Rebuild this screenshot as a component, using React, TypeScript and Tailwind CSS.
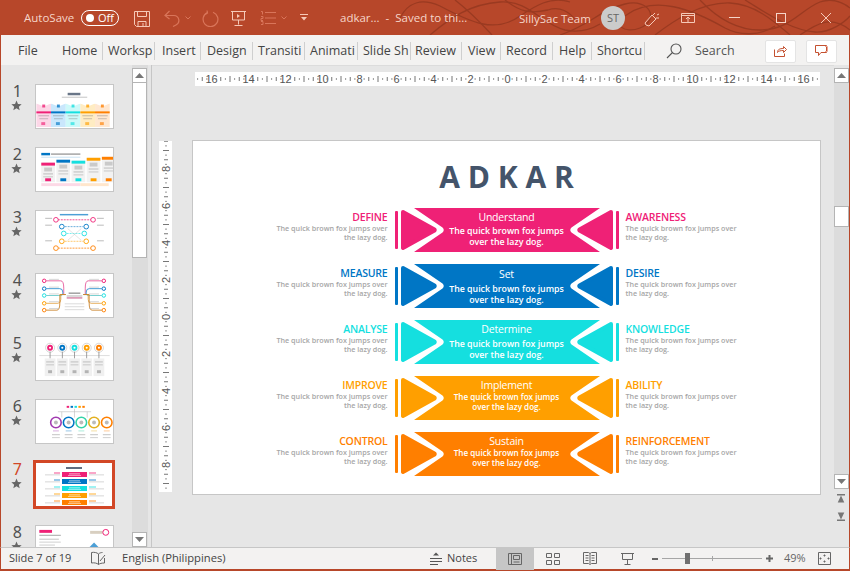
import React from "react";

const PINK = "#ef2176", BLUE = "#0076c5", CYAN = "#15dfdf", AMBER = "#ff9f00", ORANGE = "#ff7f00";

const rows = [
  { l: "DEFINE", r: "AWARENESS", m: "Understand", c: PINK, small: false, a: 2, b: 1 },
  { l: "MEASURE", r: "DESIRE", m: "Set", c: BLUE, small: false, a: 3, b: 2 },
  { l: "ANALYSE", r: "KNOWLEDGE", m: "Determine", c: CYAN, small: false, a: 2, b: 2 },
  { l: "IMPROVE", r: "ABILITY", m: "Implement", c: AMBER, small: true, a: 2, b: 0 },
  { l: "CONTROL", r: "REINFORCEMENT", m: "Sustain", c: ORANGE, small: true, a: 2, b: 0 },
];

function Banner({ c }: { c: string }) {
  return (
    <svg width="224" height="44" viewBox="0 0 224 44" className="col-start-1 row-start-1">
      <rect x="0" y="3" width="3" height="38" rx="1" fill={c} />
      <rect x="221" y="3" width="3" height="38" rx="1" fill={c} />
      <path d="M8 4 L39.500 21.500 Q40 22 39.500 22.500 L8 40 Z" fill={c} stroke={c} strokeWidth="4" strokeLinejoin="round" />
      <path d="M216 4 L184.500 21.500 Q184 22 184.500 22.500 L216 40 Z" fill={c} stroke={c} strokeWidth="4" strokeLinejoin="round" />
      <path d="M19 0 L205 0 L176.500 19.500 Q174 22 176.500 24.500 L205 44 L19 44 L47.500 24.500 Q50 22 47.500 19.500 Z" fill={c} />
    </svg>
  );
}

function Label({ title, color, right }: { title: string; color: string; right?: boolean }) {
  return (
    <div className={right ? "w-[130px] pt-[3px] text-left" : "w-[130px] pt-[3px] text-right"}>
      <div className="text-[10.500px] leading-[13px] font-semibold tracking-[-0.2px]" style={{ color }}>{title}</div>
      <div className="text-[7.200px] leading-[9px] text-[#a6a6a6] font-semibold">
        The quick brown fox jumps over<br />the lazy dog.
      </div>
    </div>
  );
}

function Slide() {
  return (
    <div className="w-[629px] h-[355px] bg-white border border-[#c6c6c6] flex flex-col items-center font-['Open_Sans',sans-serif]">
      <div className="h-[67px] pt-[12px] text-[30px] leading-[48px] font-bold text-[#44546a] whitespace-nowrap">A D K A R</div>
      <div className="flex flex-col gap-[12px]">
        {rows.map((r) => (
          <div key={r.l} className="flex h-[44px] gap-[7px]">
            <Label title={r.l} color={r.c} />
            <div className="grid w-[224px]">
              <Banner c={r.c} />
              <div className="col-start-1 row-start-1 flex flex-col items-center text-white text-center">
                <div className={r.small ? "text-[10.500px] leading-[14px] tracking-[-0.2px]" : "text-[10.500px] leading-[15px] tracking-[-0.2px]"} style={{ paddingTop: r.a }}>{r.m}</div>
                <div className={r.small ? "text-[8.100px] leading-[10px] font-semibold" : "text-[8.800px] leading-[11px] font-semibold"} style={{ paddingTop: r.b }}>
                  The quick brown fox jumps<br />over the lazy dog.
                </div>
              </div>
            </div>
            <Label title={r.r} color={r.c} right />
          </div>
        ))}
      </div>
    </div>
  );
}

const Bx = ({ x, y, w, h, c, o }: { x: number; y: number; w: number; h: number; c: string; o?: number }) => (
  <rect x={x} y={y} width={w} height={h} fill={c} opacity={o ?? 1} />
);
const five = [PINK, BLUE, CYAN, AMBER, ORANGE];

function T1() {
  const light = ["#fcd0e3", "#bfe3fb", "#c4f8f8", "#ffe9b8", "#ffe3c8"];
  return (
    <svg viewBox="0 0 78 44" className="w-full h-full blur-[0.3px]">
      <Bx x={32} y={8} w={13} h={2.5} c="#44546a" o={0.8} />
      <Bx x={26} y={12} w={26} h={1} c="#888" o={0.5} />
      {five.map((c, i) => (
        <g key={c}>
          <Bx x={i * 15} y={19} w={15} h={24} c={light[i]} o={0.85} />
          <path d={`M${i * 15} 19 l7.5 3 l7.5 -3 v-1 h-15 Z`} fill="#fff" />
          <Bx x={i * 15 + 6} y={20} w={3} h={3} c={c} o={0.8} />
          <Bx x={i * 15} y={27} w={15} h={2} c={c} />
          <Bx x={i * 15 + 2} y={31} w={11} h={1} c="#777" o={0.45} />
          <Bx x={i * 15 + 3} y={34} w={9} h={1} c="#777" o={0.4} />
          <Bx x={i * 15 + 5} y={38} w={4} h={3} c={c} o={0.65} />
        </g>
      ))}
    </svg>
  );
}
function T2() {
  const ys = [15, 12, 13, 10, 9];
  return (
    <svg viewBox="0 0 78 44" className="w-full h-full blur-[0.3px]">
      <Bx x={5} y={5} w={9} h={2.5} c={BLUE} /><Bx x={15} y={5.5} w={30} h={1.5} c="#666" o={0.6} />
      <Bx x={5} y={9} w={40} h={0.7} c={BLUE} o={0.3} />
      {five.map((c, i) => (
        <g key={c}>
          <Bx x={5 + i * 15.5} y={ys[i]} w={14} h={26 - ys[i] + 9} c="#f2f2f2" />
          <Bx x={5 + i * 15.5} y={ys[i]} w={14} h={3} c={c} />
          <Bx x={8 + i * 15.5} y={ys[i] + 5} w={8} h={4} c="#aaa" o={0.55} />
          <Bx x={7 + i * 15.5} y={ys[i] + 11} w={10} h={1} c="#888" o={0.5} />
          <Bx x={7 + i * 15.5} y={ys[i] + 14} w={10} h={1} c="#888" o={0.4} />
          <Bx x={9 + i * 15.5} y={31} w={6} h={3} c={c} />
        </g>
      ))}
      <Bx x={5} y={36} w={40} h={3} c="#fcd9e6" /><Bx x={45} y={36} w={29} h={3} c="#ffe6cc" />
    </svg>
  );
}
function T3() {
  const pts: [number, number, string][] = [[20, 9, PINK], [58, 9, PINK], [26, 16, BLUE], [51, 16, BLUE], [28, 23, CYAN], [49, 23, CYAN], [26, 31, AMBER], [51, 31, AMBER], [20, 38, ORANGE], [58, 38, ORANGE]];
  return (
    <svg viewBox="0 0 78 44" className="w-full h-full blur-[0.3px]">
      <Bx x={24} y={3} w={29} h={1.5} c={BLUE} o={0.7} />
      <path d="M22 9H56" stroke={PINK} strokeWidth=".8" strokeDasharray="2 1" />
      <path d="M29 16H48" stroke={BLUE} strokeWidth=".6" strokeDasharray="2 1" />
      <path d="M31 23H46" stroke={CYAN} strokeWidth=".6" strokeDasharray="2 1" />
      <path d="M29 31H48" stroke={AMBER} strokeWidth=".6" strokeDasharray="2 1" />
      <path d="M22 38H56" stroke={ORANGE} strokeWidth=".8" strokeDasharray="2 1" />
      <path d="M32 18L46 30M46 18L32 30" stroke="#bbb" strokeWidth=".4" />
      {pts.map(([x, y, c], i) => <circle key={i} cx={x} cy={y} r="2.4" fill="#fff" stroke={c} strokeWidth=".9" />)}
      {[7, 14, 30].map((y) => <Bx key={y} x={9} y={y} w={7} h={1} c="#777" o={0.5} />)}
      {[7, 14, 30].map((y) => <Bx key={y} x={62} y={y} w={7} h={1} c="#777" o={0.5} />)}
    </svg>
  );
}
function T4() {
  const ys = [7, 15, 22, 30, 37];
  const tc = ["#e5589a", "#2f8fd0", "#68c9c9", "#e3a64d", "#c9822a"];
  return (
    <svg viewBox="0 0 78 44" className="w-full h-full blur-[0.3px]" fill="none">
      {ys.map((y, i) => (
        <g key={y}>
          <circle cx={8} cy={y} r="1.8" stroke={five[i]} strokeWidth="1" />
          <circle cx={69} cy={y} r="1.8" stroke={five[i]} strokeWidth="1" />
          <path d={`M10 ${y}H${25 - i} Q${28 - i} ${y} ${28 - i} ${y + (22 - y) / 2}V21H30`} stroke={tc[i]} strokeWidth=".9" />
          <path d={`M67 ${y}H${53 + i} Q${50 + i} ${y} ${50 + i} ${y + (22 - y) / 2}V21H48`} stroke={tc[i]} strokeWidth=".9" />
          <Bx x={13} y={y - 2} w={10} h={0.8} c="#999" o={0.5} />
          <Bx x={54} y={y - 2} w={10} h={0.8} c="#999" o={0.5} />
        </g>
      ))}
      <Bx x={33} y={19} w={12} h={1.2} c="#555" o={0.7} />
      <Bx x={31} y={22} w={16} h={1} c="#666" o={0.5} />
      <Bx x={31} y={24} w={16} h={1} c="#b5225f" o={0.8} />
      <Bx x={29} y={30} w={20} h={1} c="#999" o={0.35} />
      <Bx x={29} y={33} w={20} h={1} c="#999" o={0.35} />
      <Bx x={29} y={36} w={20} h={1} c="#999" o={0.35} />
    </svg>
  );
}
function T5() {
  return (
    <svg viewBox="0 0 78 44" className="w-full h-full blur-[0.3px]">
      <path d="M3 19H75" stroke="#bbb" strokeWidth=".5" />
      {five.map((c, i) => {
        const x = 14 + i * 12.5;
        return (
          <g key={c}>
            <circle cx={x} cy={11} r="4.6" fill="#fff" stroke="#ccc" strokeWidth=".8" />
            <circle cx={x} cy={11} r="3" fill={c} />
            <circle cx={x} cy={11} r="1.1" fill="#fff" />
            <Bx x={x - 0.4} y={15} w={0.8} h={7} c="#888" />
            <Bx x={x - 5.5} y={22} w={11} h={18} c="#f0f0f0" />
            <Bx x={x - 4} y={25} w={8} h={1} c="#aaa" o={0.7} />
            <Bx x={x - 4} y={28} w={8} h={1} c="#aaa" o={0.6} />
            <Bx x={x - 2} y={34} w={4} h={3} c="#999" o={0.7} />
          </g>
        );
      })}
    </svg>
  );
}
function T6() {
  const cs = ["#a13bb0", BLUE, "#35d3a8", "#e3b020", ORANGE];
  return (
    <svg viewBox="0 0 78 44" className="w-full h-full blur-[0.3px]" fill="none">
      {five.map((c, i) => <Bx key={c} x={31 + i * 4} y={6} w={2.5} h={2} c={c} />)}
      <path d="M22 12H56M26 12V18M52 12V18M39 9V18" stroke="#bbb" strokeWidth=".6" />
      {cs.map((c, i) => (
        <g key={c}>
          <circle cx={20 + i * 13} cy={23} r="5.4" stroke={c} strokeWidth="1.6" fill="#fff" />
          <circle cx={20 + i * 13} cy={23} r="2" fill="#bbb" />
          <Bx x={17 + i * 13} y={31} w={6} h={1.2} c={c} o={0.35} />
          <Bx x={16 + i * 13} y={35} w={8} h={1} c="#888" o={0.5} />
          <Bx x={16 + i * 13} y={38} w={8} h={1} c="#888" o={0.4} />
        </g>
      ))}
    </svg>
  );
}
function T7() {
  return (
    <svg viewBox="0 0 76 43" className="w-full h-full blur-[0.3px]">
      <Bx x={30} y={4} w={16} h={2} c="#44546a" o={0.85} />
      {five.map((c, i) => (
        <g key={c}>
          <Bx x={26} y={9 + i * 7} w={25} h={5} c={c} />
          <Bx x={33} y={10.500 + i * 7} w={11} h={0.8} c="#fff" o={0.8} />
          <Bx x={32} y={12.200 + i * 7} w={13} h={0.7} c="#fff" o={0.7} />
          <Bx x={18} y={9.500 + i * 7} w={6} h={1} c={c} o={0.8} />
          <Bx x={9} y={11.500 + i * 7} w={15} h={0.8} c="#aaa" o={0.6} />
          <Bx x={53} y={9.500 + i * 7} w={7} h={1} c={c} o={0.8} />
          <Bx x={53} y={11.500 + i * 7} w={15} h={0.8} c="#aaa" o={0.6} />
        </g>
      ))}
    </svg>
  );
}
function T8() {
  return (
    <svg viewBox="0 0 78 44" className="w-full h-full blur-[0.3px]">
      <Bx x={3} y={4} w={13} h={3} c={PINK} />
      <Bx x={3} y={9} w={22} h={1} c="#666" o={0.6} />
      <Bx x={3} y={13} w={20} h={1} c="#888" o={0.5} />
      <Bx x={3} y={16} w={22} h={1} c="#888" o={0.4} />
      <Bx x={3} y={19} w={16} h={1} c="#888" o={0.4} />
      <Bx x={55} y={5} w={13} h={3} c="#d8cfc0" />
      <circle cx={71} cy={6.5} r="3" fill="#fff" stroke={PINK} strokeWidth="1" />
      <path d="M59 17 L52 24 H66 Z" fill={BLUE} opacity=".7" />
      <path d="M52 24 H66 L70 31 H48 Z" fill={AMBER} />
      <Bx x={44} y={24} w={3} h={3} c={BLUE} o={0.7} />
    </svg>
  );
}

const thumbs = [T1, T2, T3, T4, T5, T6, T7, T8];

function ThumbList() {
  return (
    <div className="flex-1 overflow-hidden pt-[19px] font-['Noto_Sans',sans-serif]">
      {thumbs.map((T, i) => {
        const sel = i === 6;
        return (
          <div key={i} className="flex h-[63px]">
            <div className="w-[34px] flex flex-col items-end pr-[13px] -mt-[4px]">
              <div className={sel ? "text-[16px] leading-[22px] text-[#d24726]" : "text-[16px] leading-[22px] text-[#505050]"}>{i + 1}</div>
              <svg width="11" height="11" viewBox="0 0 24 24" className="-mt-[2px]" fill="#666">
                <path d="M12 1l3.2 7.6 8 .7-6.1 5.3 1.9 8L12 18l-7 4.6 1.9-8L.8 9.3l8-.7z" />
              </svg>
            </div>
            <div className={sel ? "w-[76px] h-[43px] ml-[1px] mt-[1px] bg-white outline-[3px] outline-solid outline-[#d24726]" : "w-[79px] h-[45px] bg-white border border-[#c6c6c6]"}>
              <T />
            </div>
          </div>
        );
      })}
    </div>
  );
}

function ScrollBtn({ down }: { down?: boolean }) {
  return (
    <div className="h-[15px] w-[15px] shrink-0 bg-white border border-[#b4b4b4] flex items-center justify-center">
      <svg width="9" height="5" viewBox="0 0 9 5" fill="#777">
        <path d={down ? "M0 0H9L4.5 5Z" : "M0 5H9L4.5 0Z"} />
      </svg>
    </div>
  );
}

function HRuler() {
  const items: React.ReactNode[] = [];
  for (let i = -68; i <= 68; i++) {
    const x = 312.5 + i * 4.625;
    if (i % 8 === 0) {
      items.push(<text key={i} x={x} y="11" fontSize="11" textAnchor="middle" fill="#555">{Math.abs(i / 4)}</text>);
    } else {
      const h = i % 4 === 0 ? 6 : i % 2 === 0 ? 4 : 1.5;
      items.push(<rect key={i} x={x - 0.5} y={7 - h / 2} width="1" height={h} fill="#777" />);
    }
  }
  return (
    <svg width="625" height="14" viewBox="0 0 625 14" className="bg-white font-['Liberation_Sans',sans-serif]">{items}</svg>
  );
}

function VRuler() {
  const items: React.ReactNode[] = [];
  for (let i = -38; i <= 38; i++) {
    const y = 176 + i * 4.625;
    if (i % 8 === 0) {
      items.push(<text key={i} x="0" y="0" transform={`translate(11 ${y}) rotate(-90)`} fontSize="11" textAnchor="middle" fill="#555">{Math.abs(i / 4)}</text>);
    } else {
      const w = i % 4 === 0 ? 6 : i % 2 === 0 ? 4 : 1.5;
      items.push(<rect key={i} x={7 - w / 2} y={y - 0.5} width={w} height="1" fill="#777" />);
    }
  }
  return (
    <svg width="13" height="351" viewBox="0 0 13 351" className="bg-white mt-[1px] font-['Liberation_Sans',sans-serif]">{items}</svg>
  );
}

const IC = "#f6c9b8";
const DIM = "#d9755a";

function Swirl() {
  return (
    <svg className="absolute left-0 top-0 pointer-events-none" width="850" height="35" viewBox="0 0 850 35" fill="none" stroke="#9a3a21" strokeWidth="1.3">
      <path d="M400 18 C408 2 422 -2 440 6 C470 22 495 34 520 16 C535 6 550 -4 570 2" />
      <path d="M430 35 C450 18 470 4 500 2 C530 0 540 24 565 30 C580 33 590 30 600 24" />
      <path d="M455 0 C468 10 480 22 492 35" />
      <path d="M560 35 C590 25 600 10 625 4 C650 -2 660 20 640 28 C625 34 610 25 628 14 C655 -4 690 8 725 28 C740 36 760 36 775 26" />
      <path d="M700 0 C715 16 735 30 760 30 C790 30 800 10 820 2 C835 -3 845 4 850 8" />
      <path d="M745 0 C765 12 790 30 815 32 C830 33 845 22 850 16" />
      <path d="M655 35 C672 22 700 2 730 3 C755 4 775 22 790 35" />
      <path d="M505 0 C520 12 530 14 548 10 C560 6 570 12 575 20" />
      <path d="M800 35 C815 25 830 14 850 30" />
    </svg>
  );
}

function TitleBar() {
  return (
    <div className="relative h-[35px] shrink-0 bg-[#b7472a] flex items-center text-[#f6d5c9] text-[11.500px] font-['Open_Sans',sans-serif] whitespace-nowrap">
      <Swirl />
      <div className="relative flex items-center w-full">
        <span className="ml-[24px] w-[57px] mt-[1px]">AutoSave</span>
        <div className="w-[38px] h-[16px] border border-white rounded-full flex items-center pl-[4px] gap-[4px]">
          <div className="w-[8px] h-[8px] bg-white rounded-full" />
          <span className="text-[11px] text-white leading-none">Off</span>
        </div>
        <svg className="ml-[15px] mt-[2px]" width="16" height="16" viewBox="0 0 16 16" fill="none" stroke={IC}>
          <path d="M.5.5h15v15H2.500l-2-2zM3.500.5v5h9v-5M4 15.500v-5h8v5M9 12v3" />
        </svg>
        <svg className="ml-[14px] mt-[2px]" width="17" height="17" viewBox="0 0 17 17" fill="none" stroke={DIM} strokeWidth="1.2">
          <path d="M5.500 1L1 5.500 5.500 9M1.500 5.500H10a5 5 0 0 1 2 9.500l-3 1.500" />
        </svg>
        <svg className="ml-[4px]" width="6" height="4" viewBox="0 0 6 4" fill="none" stroke={DIM}><path d="M.5.5L3 3 5.500.5" /></svg>
        <svg className="ml-[11px] mt-[2px]" width="17" height="17" viewBox="0 0 17 17" fill="none" stroke={DIM} strokeWidth="1.2">
          <path d="M5.300 2.600A7.400 7.400 0 1 0 11 2.300M5 .5L5.500 3 2.500 5" />
        </svg>
        <svg className="ml-[12px] mt-[1px]" width="16" height="16" viewBox="0 0 16 16" fill="none" stroke={IC}>
          <path d="M0 1.500h15M1.500 1.500v8.500h12V1.500M7.500 10v4.500M3.500 15.500h8" /><path d="M6 4l3 2-3 2z" fill={IC} stroke="none" />
        </svg>
        <svg className="ml-[13px] mt-[1px]" width="16" height="14" viewBox="0 0 16 14" fill="none" stroke={DIM}>
          <path d="M5 1.500h11M5 7h11M5 12.500h11M1 .5h1.500v3M1 5.500h2v2H1v2h2M1 10.500h2v3H1" />
        </svg>
        <svg className="ml-[5px]" width="6" height="4" viewBox="0 0 6 4" fill="none" stroke={DIM}><path d="M.5.5L3 3 5.500.5" /></svg>
        <svg className="ml-[13px]" width="8" height="7" viewBox="0 0 8 7" fill={IC}><path d="M0 0h8v1H0zM1 3h6L4 6.500z" /></svg>
        <span className="ml-[32px] mt-[1px]">adkar...&nbsp; -&nbsp; Saved to thi...</span>
        <span className="absolute left-[519px] mt-[2px]">SillySac Team</span>
        <div className="absolute left-[601px] mt-[1px] w-[24px] h-[24px] rounded-full bg-[#cbcbcb] flex items-center justify-center text-[11px] text-[#666]">ST</div>
        <svg className="absolute left-[644px] mt-[2px]" width="16" height="16" viewBox="0 0 16 16" fill="none" stroke={IC}>
          <path d="M1 12L8 4l4 4-7 7-3-1zM9 4l2-2M13 4l2-1M12 7l3 0" />
        </svg>
        <svg className="absolute left-[681px]" width="14" height="10" viewBox="0 0 14 10" fill="none" stroke={IC}>
          <path d="M.5.5h13v9H.5zM.5 2.500h13M7 9V4M5 6l2-2 2 2" />
        </svg>
        <div className="absolute left-[729px] w-[11px] h-[1px] bg-[#f6d5c9]" />
        <div className="absolute left-[776px] w-[10px] h-[10px] border border-[#f6d5c9]" />
        <svg className="absolute left-[821px]" width="10" height="10" viewBox="0 0 10 10" stroke={IC}><path d="M0 0L10 10M10 0L0 10" /></svg>
      </div>
    </div>
  );
}

const tabs: { t: string; w: number; pl: number; sep: boolean }[] = [
  { t: "File", w: 54, pl: 18, sep: false },
  { t: "Home", w: 49, pl: 8, sep: true },
  { t: "Worksp", w: 52, pl: 5, sep: true },
  { t: "Insert", w: 46, pl: 7, sep: true },
  { t: "Design", w: 52, pl: 6, sep: true },
  { t: "Transiti", w: 52, pl: 5, sep: true },
  { t: "Animati", w: 53, pl: 5, sep: true },
  { t: "Slide Sh", w: 53, pl: 5, sep: true },
  { t: "Review", w: 51, pl: 4, sep: true },
  { t: "View", w: 39, pl: 6, sep: true },
  { t: "Record", w: 52, pl: 5, sep: true },
  { t: "Help", w: 39, pl: 6, sep: true },
  { t: "Shortcu", w: 53, pl: 5, sep: true },
];

function Ribbon() {
  return (
    <div className="h-[30px] shrink-0 pt-[2px] bg-[#f3f2f1] flex items-center text-[12.500px] text-[#444] font-['Open_Sans',sans-serif] whitespace-nowrap border-l border-[#b7472a] border-r">
      <div className="flex -ml-[1px] items-center">
        {tabs.map((x) => (
          <div key={x.t} className={x.sep ? "h-[18px] leading-[18px] overflow-hidden border-r border-[#cfcfcf]" : "h-[18px] leading-[18px] overflow-hidden"} style={{ width: x.w, paddingLeft: x.pl }}>
            {x.t}
          </div>
        ))}
      </div>
      <svg className="ml-[21px]" width="16" height="16" viewBox="0 0 16 16" fill="none" stroke="#555" strokeWidth="1.1">
        <circle cx="10" cy="6" r="5" /><path d="M6.500 9.500L1 15" />
      </svg>
      <span className="ml-[13px] text-[#555]">Search</span>
      <div className="ml-[30px] w-[31px] h-[23px] bg-white border border-[#e4e4e4] rounded-[2px] flex items-center justify-center">
        <svg width="13" height="12" viewBox="0 0 13 12" fill="none" stroke="#c4502f">
          <path d="M.5 4.500v7h10v-3M3.500 7.500c0-3 2-4 6-4V1.500L12.500 4.500 9.500 7.500V5.500c-3 0-5 .5-6 2z" />
        </svg>
      </div>
      <div className="ml-[10px] w-[31px] h-[23px] bg-white border border-[#e4e4e4] rounded-[2px] flex items-center justify-center">
        <svg width="13" height="12" viewBox="0 0 13 12" fill="none" stroke="#c4502f">
          <path d="M.5.5h11v7H6l-2.500 3v-3h-3z" /><path d="M10 1.500h2.500v5H10" stroke="#e8a592" />
        </svg>
      </div>
    </div>
  );
}

function Main() {
  return (
    <div className="flex-1 flex min-h-0 bg-[#e6e6e6] border-l border-r border-[#b7472a] relative">
      <div className="w-[131px] flex min-h-0">
        <ThumbList />
      </div>
      <div className="w-[16px] bg-[#dcdcdc] flex flex-col pt-[3px] items-start">
        <ScrollBtn />
        <div className="w-[15px] h-[176px] bg-white border border-[#b4b4b4] -mt-[1px]" />
        <div className="flex-1" />
        <ScrollBtn down />
      </div>
      <div className="w-[3px]" />
      <div className="w-[1px] bg-[#c6c6c6]" />
      <div className="flex-1 flex flex-col pl-[7px] pt-[6px] border-t border-[#dcdcdc]">
        <div className="ml-[36px]"><HRuler /></div>
        <div className="flex mt-[54px] gap-[20px]">
          <VRuler />
          <Slide />
        </div>
      </div>
      <div className="w-[15px] flex flex-col pt-[3px] items-start">
        <ScrollBtn />
        <div className="w-[15px] h-[391px] bg-[#dcdcdc] flex flex-col">
          <div className="h-[123px]" />
          <div className="h-[21px] bg-white border border-[#b4b4b4]" />
        </div>
        <ScrollBtn down />
        <svg className="mt-[5px] ml-[3px]" width="8" height="9" viewBox="0 0 11 9" fill="#777" preserveAspectRatio="none"><path d="M0 0h11v1.500H0zM5.500 1.500L10 8.500H1z" /></svg>
        <svg className="mt-[9px] ml-[3px]" width="8" height="9" viewBox="0 0 11 9" fill="#777" preserveAspectRatio="none"><path d="M0 7.500h11V9H0zM5.500 7.500L10 .5H1z" /></svg>
      </div>
    </div>
  );
}

function StatusBar() {
  return (
    <div className="h-[24px] shrink-0 bg-[#f3f2f1] border-t border-[#c6c6c6] border-l border-r border-b-2 flex items-center text-[11.200px] text-[#444] font-['Open_Sans',sans-serif] whitespace-nowrap border-l-[#b7472a] border-r-[#b7472a] border-b-[#b7472a]">
      <span className="ml-[8px] w-[82px] text-[11px]">Slide 7 of 19</span>
      <svg width="15" height="15" viewBox="0 0 15 15" fill="none" stroke="#666">
        <path d="M7.500 3C6 1.500 3 1 .5 1.500v10.500c2.500-.5 5.500 0 7 1.500V3zM7.500 3c1-1 2.500-1.500 4-1.500M7.500 13.500c1.500-1 3-1.500 6-1.500V7M9 10l5-6" />
      </svg>
      <span className="ml-[16px] w-[308px]">English (Philippines)</span>
      <svg width="12" height="13" viewBox="0 0 12 13" stroke="#555" fill="none">
        <path d="M0 6.500h12M0 9.500h12M0 12.500h8" /><path d="M3 3.500L6 .5l3 3z" fill="#555" stroke="none" />
      </svg>
      <span className="ml-[5px] w-[49px] text-[11px]">Notes</span>
      <div className="w-[38px] h-[22px] bg-[#c6c6c6] flex items-center justify-center">
        <svg width="14" height="12" viewBox="0 0 14 12" fill="none" stroke="#666"><path d="M.5.5h13v11H.5zM3.500.5v11M5.500 2.500h6v4h-6zM5.500 9h6" /></svg>
      </div>
      <svg className="ml-[12px]" width="14" height="12" viewBox="0 0 14 12" fill="none" stroke="#666"><path d="M.5.5h5v4h-5zM8.500.5h5v4h-5zM.5 7.500h5v4h-5zM8.500 7.500h5v4h-5z" /></svg>
      <svg className="ml-[23px]" width="14" height="13" viewBox="0 0 14 13" fill="none" stroke="#666"><path d="M.5.5h5l1.500 1 1.500-1h5v11h-5l-1.500 1-1.500-1h-5zM7 1.500v10M2.500 3.500h3M2.500 6h3M2.500 8.500h3M8.500 3.500h3M8.500 6h3M8.500 8.500h3" /></svg>
      <svg className="ml-[24px]" width="13" height="13" viewBox="0 0 13 13" fill="none" stroke="#666"><path d="M0 1.500h13M1.500 1.500v6h10v-6M6.500 7.500v5M3.500 12.500h6" /></svg>
      <div className="ml-[18px] w-[6px] h-[2px] bg-[#666]" />
      <div className="ml-[4px] w-[100px] h-[1px] bg-[#a6a6a6] relative">
        <div className="absolute left-[23px] -top-[5px] w-[5px] h-[11px] bg-[#707070]" />
        <div className="absolute left-[50px] -top-[2px] w-[1px] h-[5px] bg-[#a6a6a6]" />
      </div>
      <svg className="ml-[4px]" width="7" height="7" viewBox="0 0 7 7" fill="#666"><path d="M0 2.500h7v2H0zM2.500 0h2v7h-2z" /></svg>
      <span className="ml-[11px] w-[34px] text-[11px] text-[#666]">49%</span>
      <svg width="13" height="13" viewBox="0 0 13 13" fill="none" stroke="#666"><path d="M.5.5h12v12H.5zM6.500 2.500v2M5.500 3.500h2M6.500 8.500v2M5.500 9.500h2M2.500 5.500v2M1.500 6.500h2M10.500 5.500v2M9.500 6.500h2" /></svg>
    </div>
  );
}

export default function App() {
  return (
    <div className="w-[850px] h-[571px] overflow-hidden flex flex-col bg-[#e6e6e6]">
      <TitleBar />
      <Ribbon />
      <Main />
      <StatusBar />
    </div>
  );
}
